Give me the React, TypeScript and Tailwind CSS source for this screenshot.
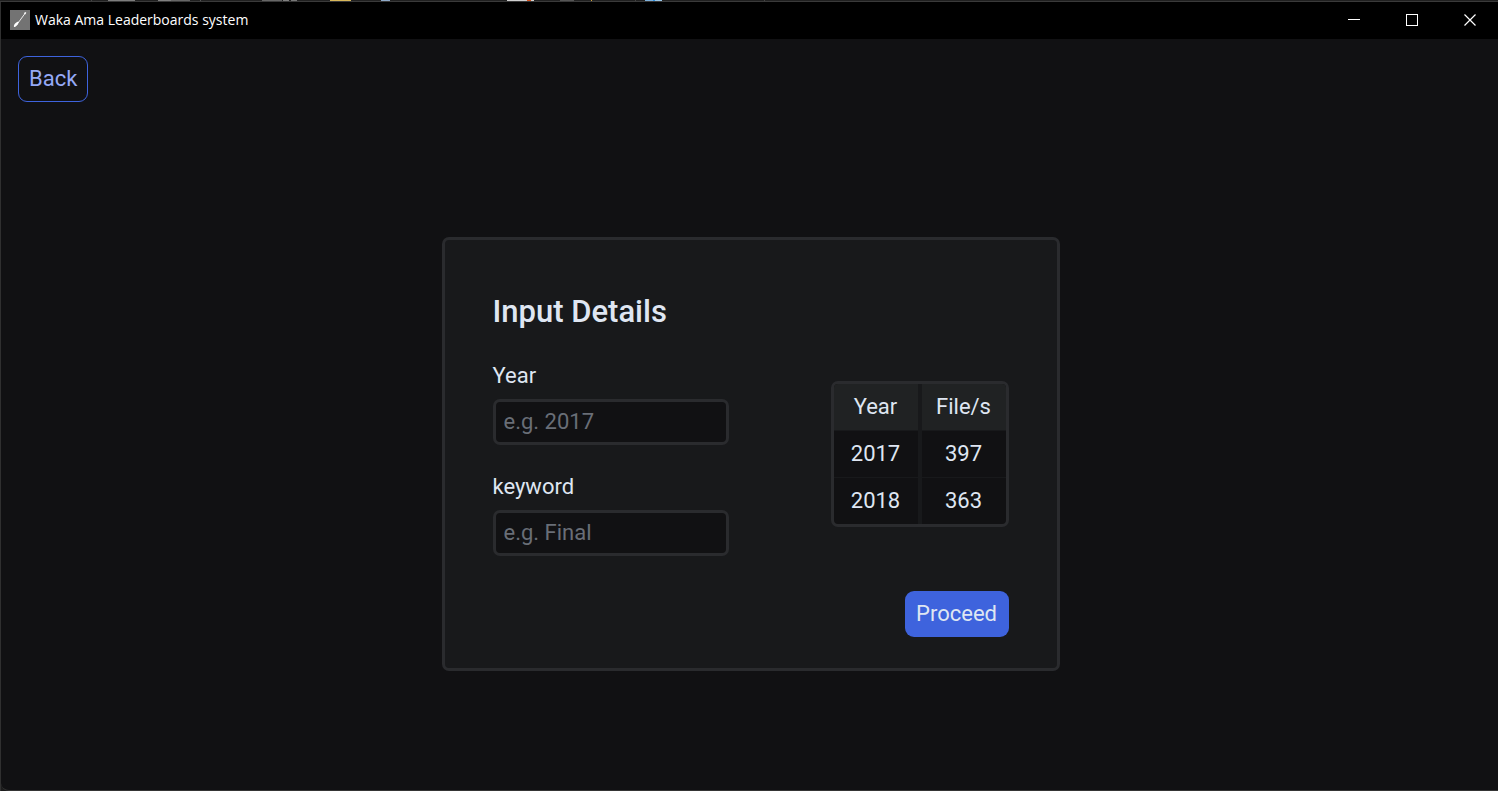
const files = [
  { year: '2017', count: 397 },
  { year: '2018', count: 363 },
];

const strip = [
  { x: 91, w: 1, c: '#444444' },
  { x: 108, w: 27, c: '#7d7d7d' },
  { x: 158, w: 13, c: '#808080' },
  { x: 171, w: 19, c: '#666666' },
  { x: 200, w: 1, c: '#555555' },
  { x: 262, w: 20, c: '#666666' },
  { x: 283, w: 6, c: '#808080' },
  { x: 291, w: 6, c: '#777777' },
  { x: 330, w: 21, c: '#d9b85a' },
  { x: 381, w: 9, c: '#8fa9c8' },
  { x: 507, w: 20, c: '#d0d0d0' },
  { x: 527, w: 4, c: '#d9531e' },
  { x: 531, w: 3, c: '#d0d0d0' },
  { x: 560, w: 14, c: '#555555' },
  { x: 591, w: 1, c: '#c9a13b' },
  { x: 635, w: 1, c: '#444444' },
  { x: 645, w: 8, c: '#7fb2dc' },
  { x: 653, w: 2, c: '#2f8fe0' },
  { x: 655, w: 7, c: '#9cc8e8' },
  { x: 764, w: 1, c: '#444444' },
];

function TitleBar() {
  return (
    <header className="flex h-[37px] items-center bg-black pb-px pl-[9px] text-white">
      <svg width="20" height="20" viewBox="0 0 20 20" className="shrink-0" aria-hidden="true">
        <rect width="20" height="20" fill="#737373" />
        <path d="M15 3.5 L8 13" stroke="#ececec" strokeWidth="1" />
        <path d="M13.8 3.2 L15.2 2 L16.3 2.8 L15.2 4.4 Z" fill="#fff" />
        <path d="M8.6 11.6 C9 13.4 7.2 15.8 5 16.9 C4.2 17.1 3.7 16.6 3.9 15.7 C4.6 13.6 6.4 11.9 8.6 11.6 Z" fill="#fff" />
      </svg>
      <h1 className="ml-[5px] flex-1 font-['Open_Sans',sans-serif] text-[14px] leading-5">
        Waka Ama Leaderboards system
      </h1>
      <button type="button" aria-label="Minimize" className="flex h-full w-14 items-center justify-center">
        <svg width="12" height="12" shapeRendering="crispEdges">
          <path d="M0 5.5H12" stroke="#fff" />
        </svg>
      </button>
      <button type="button" aria-label="Maximize" className="flex h-full w-[60px] items-center justify-center">
        <svg width="12" height="12" shapeRendering="crispEdges">
          <rect x="0.5" y="0.5" width="11" height="11" fill="none" stroke="#fff" />
        </svg>
      </button>
      <button type="button" aria-label="Close" className="flex h-full w-14 items-center justify-center">
        <svg width="12" height="12">
          <path d="M0.5 0.5L11.5 11.5M11.5 0.5L0.5 11.5" stroke="#fff" strokeWidth="1.2" />
        </svg>
      </button>
    </header>
  );
}

function Field({ id, label, placeholder }: { id: string; label: string; placeholder: string }) {
  return (
    <div className="flex flex-col gap-[9px]">
      <label htmlFor={id} className="leading-7">
        {label}
      </label>
      <input
        id={id}
        type="text"
        placeholder={placeholder}
        className="h-[46px] w-[236px] rounded-[7px] border-[3px] border-[#2a2b2e] bg-[#111113] px-2 pb-[2px] text-[#edeef0] outline-none placeholder:text-[#696e77]"
      />
    </div>
  );
}

export default function App() {
  return (
    <div className="flex min-h-screen flex-col bg-[#1c1c1c] font-[Roboto,sans-serif] text-[22px] text-[#dfe6f2]">
      <svg className="h-[2px] w-full shrink-0" aria-hidden="true" shapeRendering="crispEdges">
        <rect width="100%" height="1" fill="#202020" />
        {strip.map((s) => (
          <rect key={s.x} x={s.x} width={s.w} height="1" fill={s.c} />
        ))}
        <rect y="1" width="100%" height="1" fill="#3a3a3a" />
      </svg>
      <div className="flex flex-1 flex-col border-l border-[#303030]">
        <TitleBar />
        <main className="flex flex-1 flex-col rounded-bl-lg border-b border-[#353535] bg-[#111113]">
          <div className="px-[17px] pt-[17px] pb-4">
            <button
              type="button"
              className="flex h-[46px] items-center rounded-[9px] border border-[#3e63dd] px-[10px] pb-[2px] text-[#95a9f6]"
            >
              Back
            </button>
          </div>
          <div className="flex flex-1 items-center justify-center pl-[2px]">
            <form
              className="flex w-[618px] flex-col rounded-[7px] border-[3px] border-[#2a2b2e] bg-[#18191b] px-12 pt-[54px] pb-[31px]"
              onSubmit={(e) => e.preventDefault()}
            >
              <h2 className="text-[31px] leading-9 font-medium">Input Details</h2>
              <div className="mt-8 flex items-start justify-between">
                <div className="flex flex-col gap-7">
                  <Field id="year" label="Year" placeholder="e.g. 2017" />
                  <Field id="keyword" label="keyword" placeholder="e.g. Final" />
                </div>
                <div className="mt-[19px] overflow-hidden rounded-[7px] border-[3px] border-[#2a2b2e] bg-[#111113]">
                  <table className="w-[172px] table-fixed border-collapse text-center">
                    <thead>
                      <tr className="h-[46px] bg-[#202223]">
                        <th scope="col" className="border-r-4 border-[#18191b] p-0 font-normal">Year</th>
                        <th scope="col" className="p-0 font-normal">File/s</th>
                      </tr>
                    </thead>
                    <tbody>
                      {files.map((f) => (
                        <tr key={f.year} className="h-[47px] border-t border-[#18191b]">
                          <td className="border-r-4 border-[#18191b] p-0">{f.year}</td>
                          <td className="p-0">{f.count}</td>
                        </tr>
                      ))}
                    </tbody>
                  </table>
                </div>
              </div>
              <button
                type="submit"
                className="mt-[35px] flex h-[46px] min-w-[104px] items-center justify-center self-end rounded-[9px] bg-[#3e63dd] px-[11px] pb-[2px] text-[#dfe6f2]"
              >
                Proceed
              </button>
            </form>
          </div>
        </main>
      </div>
    </div>
  );
}
